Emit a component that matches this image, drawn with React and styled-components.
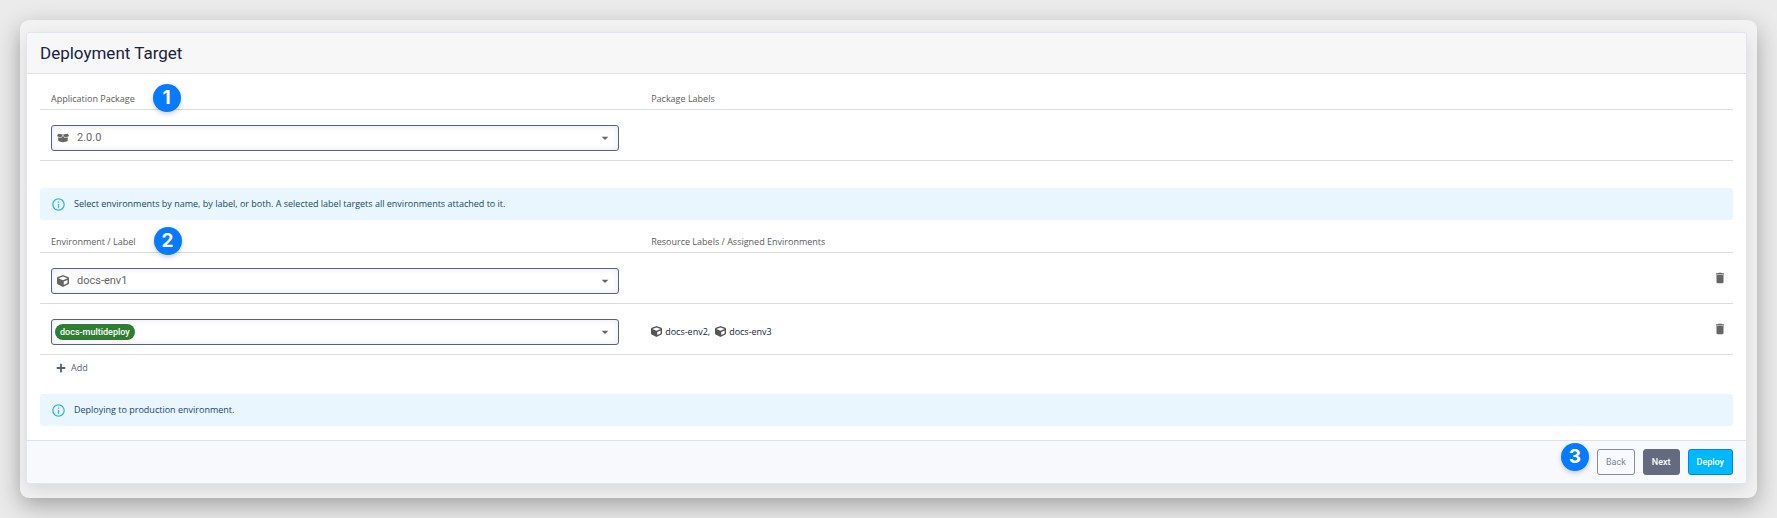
import styled, { createGlobalStyle } from "styled-components";
import { FaBoxOpen, FaCube, FaPlus } from "react-icons/fa";
import { MdArrowDropDown, MdDelete, MdInfoOutline } from "react-icons/md";

/* ----------------------- data ----------------------- */
const environments = ["docs-env1", "docs-env2", "docs-env3"];
const packages = ["2.0.0"];
const labels = ["docs-multideploy"];

/* ----------------------- layout ----------------------- */
const GlobalStyle = createGlobalStyle`
  *,
  *::before,
  *::after {
    box-sizing: border-box;
  }

  body {
    margin: 0;
    background: #ebebeb;
    font-family: "Open Sans", "Liberation Sans", sans-serif;
    font-size: 9px;
    line-height: 16px;
    color: #172340;
  }

  button,
  select {
    font: inherit;
  }
`;

const controlFont = `Roboto, "Liberation Sans", sans-serif`;

const Page = styled.div`
  padding: 20px;
`;

const Frame = styled.div`
  padding: 13px 11px 15px 7px;
  border-radius: 9px;
  background: #f2f2f2;
  box-shadow: 0 8px 24px rgba(0, 0, 0, 0.3);
`;

const Panel = styled.main`
  border-radius: 3px;
  background: #fff;
  box-shadow: 0 0 0 1px #e2e3f3, 0 6px 18px rgba(0, 0, 0, 0.12);
`;

const Header = styled.header`
  padding: 8px 13px;
  border-bottom: 1px solid #dfe0ea;
  border-radius: 3px 3px 0 0;
  background: #f7f7f7;
`;

const Title = styled.h1`
  margin: 0;
  font-family: ${controlFont};
  font-size: 17px;
  font-weight: 400;
  line-height: 24px;
`;

const Body = styled.div`
  padding: 3px 13px 14px;
`;

const Footer = styled.footer`
  display: flex;
  justify-content: flex-end;
  align-items: center;
  gap: 8px;
  padding: 8px 13px;
  border-top: 1px solid #dfe0ea;
  border-radius: 0 0 3px 3px;
  background: #f7f9fd;
`;

/* ----------------------- table ----------------------- */
const Table = styled.table`
  width: 100%;
  border-spacing: 0;
  table-layout: fixed;
`;

const HeadCell = styled.th`
  width: ${(p) => p.$width || "auto"};
  height: 33px;
  padding: 11px 11px 0;
  border-bottom: 1px solid #dcdcdc;
  color: #5c5c5c;
  font-weight: 400;
  text-align: left;
`;

const Cell = styled.td`
  height: 51px;
  padding: ${(p) => (p.$field ? "5px 21px 0 11px" : "5px 6px 0 11px")};
  border-bottom: 1px solid #dcdcdc;
  text-align: ${(p) => (p.$end ? "right" : "left")};
`;

const Marked = styled.span`
  position: relative;
`;

const Step = styled.span`
  display: flex;
  justify-content: center;
  align-items: center;
  width: 28px;
  height: 28px;
  border-radius: 50%;
  background: #067bff;
  box-shadow: 0 2px 5px rgba(0, 0, 0, 0.2);
  color: #fff;
  font-family: Inter, sans-serif;
  font-size: 19px;
  font-weight: 700;
`;

const HeadStep = styled(Step)`
  position: absolute;
  top: 50%;
  left: 100%;
  margin: -14px 0 0 18px;
`;

/* sits a little above the buttons without making the footer taller */
const FootStep = styled(Step)`
  margin: -6px 0 4px;
`;

/* ----------------------- fields ----------------------- */
const Field = styled.div`
  display: flex;
  align-items: center;
  height: 26px;
  padding: 0 5px 0 ${(p) => (p.$chip ? "3px" : "5px")};
  border: 1px solid #58607f;
  border-radius: 3px;
  background: #fff;
  box-shadow: inset 0 0 6px #e4e5f0;
  color: #666;
`;

const Select = styled.select`
  flex: 1;
  min-width: 0;
  padding: 0 0 0 8px;
  border: 0;
  background: none;
  color: #666;
  font-family: ${controlFont};
  font-size: 11px;
  appearance: none;
`;

const ChipSelect = styled.select`
  height: 16px;
  margin-right: auto;
  padding: 0 5px;
  border: 0;
  border-radius: 8px;
  background: #2e7d32;
  color: #fff;
  font-family: ${controlFont};
  font-weight: 500;
  line-height: 16px;
  appearance: none;
  field-sizing: content;
`;

const Assigned = styled.div`
  display: flex;
  align-items: center;
  gap: 5px;
`;

const Env = styled.span`
  display: flex;
  align-items: center;
  gap: 3px;

  svg {
    color: #555;
  }
`;

const IconButton = styled.button`
  padding: 0;
  border: 0;
  background: none;
  color: #666;
  line-height: 0;
`;

const AddButton = styled.button`
  display: flex;
  align-items: center;
  gap: 5px;
  margin: 5px 0 18px;
  padding: 0 16px;
  border: 0;
  background: none;
  color: #58607f;
`;

/* ----------------------- notice, buttons ----------------------- */
const Notice = styled.div`
  display: flex;
  align-items: center;
  gap: 8px;
  height: 32px;
  margin-top: ${(p) => p.$top || "0"};
  padding: 0 11px;
  border-radius: 3px;
  background: #e9f6fe;
  color: #14486a;

  svg {
    color: #29b6f6;
  }
`;

const Button = styled.button`
  height: 26px;
  padding: 0 8px;
  border: 1px solid ${(p) => p.$border};
  border-radius: 3px;
  background: ${(p) => p.$bg};
  color: ${(p) => p.$color};
  font-family: ${controlFont};
  font-weight: ${(p) => p.$weight || 500};
`;

/* ----------------------- component ----------------------- */
function PlainSelect({ icon, label, options }) {
  return (
    <Field>
      {icon}
      <Select aria-label={label} defaultValue={options[0]}>
        {options.map((o) => (
          <option key={o}>{o}</option>
        ))}
      </Select>
      <MdArrowDropDown size={16} />
    </Field>
  );
}

export default function App() {
  return (
    <Page>
      <GlobalStyle />
      <Frame>
        <Panel>
          <Header>
            <Title>Deployment Target</Title>
          </Header>

          <Body>
            <Table>
              <thead>
                <tr>
                  <HeadCell $width="35.45%">
                    <Marked>
                      Application Package
                      <HeadStep>1</HeadStep>
                    </Marked>
                  </HeadCell>
                  <HeadCell>Package Labels</HeadCell>
                </tr>
              </thead>
              <tbody>
                <tr>
                  <Cell $field>
                    <PlainSelect
                      icon={<FaBoxOpen size={12} />}
                      label="Application Package"
                      options={packages}
                    />
                  </Cell>
                  <Cell />
                </tr>
              </tbody>
            </Table>

            <Notice $top="27px">
              <MdInfoOutline size={15} />
              Select environments by name, by label, or both. A selected label
              targets all environments attached to it.
            </Notice>

            <Table>
              <thead>
                <tr>
                  <HeadCell $width="35.45%">
                    <Marked>
                      Environment / Label
                      <HeadStep>2</HeadStep>
                    </Marked>
                  </HeadCell>
                  <HeadCell>Resource Labels / Assigned Environments</HeadCell>
                  <HeadCell $width="60px" />
                </tr>
              </thead>
              <tbody>
                <tr>
                  <Cell $field>
                    <PlainSelect
                      icon={<FaCube size={12} />}
                      label="Environment"
                      options={environments}
                    />
                  </Cell>
                  <Cell />
                  <Cell $end>
                    <IconButton aria-label="Remove docs-env1">
                      <MdDelete size={14} />
                    </IconButton>
                  </Cell>
                </tr>
                <tr>
                  <Cell $field>
                    <Field $chip>
                      <ChipSelect aria-label="Label">
                        {labels.map((l) => (
                          <option key={l}>{l}</option>
                        ))}
                      </ChipSelect>
                      <MdArrowDropDown size={16} />
                    </Field>
                  </Cell>
                  <Cell>
                    <Assigned>
                      <Env>
                        <FaCube size={11} />
                        docs-env2,
                      </Env>
                      <Env>
                        <FaCube size={11} />
                        docs-env3
                      </Env>
                    </Assigned>
                  </Cell>
                  <Cell $end>
                    <IconButton aria-label="Remove docs-multideploy">
                      <MdDelete size={14} />
                    </IconButton>
                  </Cell>
                </tr>
              </tbody>
            </Table>

            <AddButton>
              <FaPlus size={10} />
              Add
            </AddButton>

            <Notice>
              <MdInfoOutline size={15} />
              Deploying to production environment.
            </Notice>
          </Body>

          <Footer>
            <FootStep>3</FootStep>
            <Button $bg="#f9fafe" $border="#858a9c" $color="#7d8292" $weight={400}>
              Back
            </Button>
            <Button $bg="#646b80" $border="#646b80" $color="#fff">
              Next
            </Button>
            <Button $bg="#00b8ff" $border="#0783e8" $color="#fff">
              Deploy
            </Button>
          </Footer>
        </Panel>
      </Frame>
    </Page>
  );
}
